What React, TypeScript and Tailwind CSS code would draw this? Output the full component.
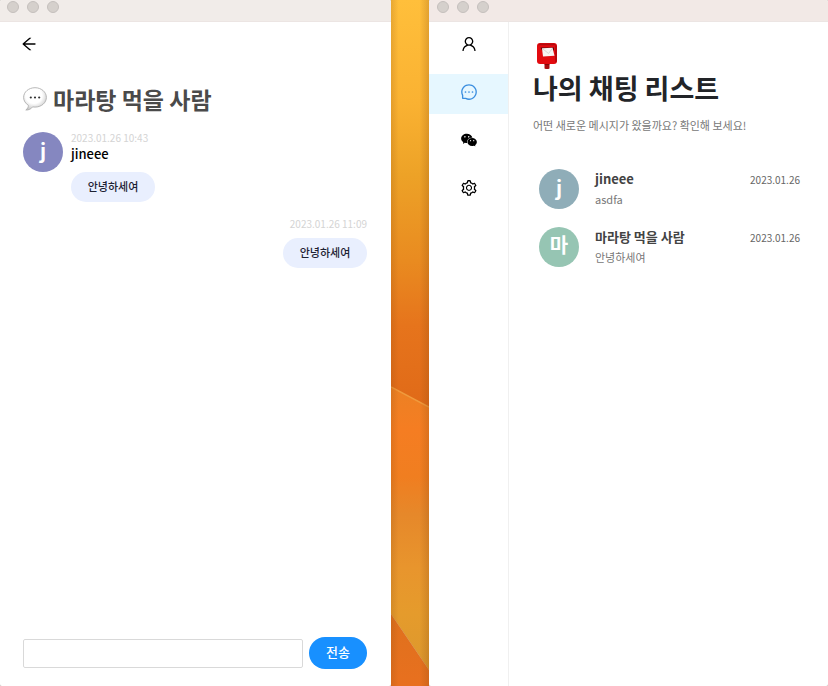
import { useState, type ReactNode } from "react";
import {
  AiOutlineArrowLeft,
  AiOutlineUser,
  AiOutlineMessage,
  AiOutlineWechat,
  AiOutlineSetting,
} from "react-icons/ai";

function TitleBar({ className }: { className: string }) {
  return (
    <div className={`flex h-[22px] shrink-0 gap-2 border-b border-[#ece5e3] ${className}`}>
      {[0, 1, 2].map((i) => (
        <span key={i} className="mt-px size-3 rounded-full border border-[#c4bfbc] bg-[#d5d0cc]" />
      ))}
    </div>
  );
}

function Avatar({ letter, color }: { letter: string; color: string }) {
  return (
    <span
      className={`flex size-10 shrink-0 items-center justify-center rounded-full pb-1 text-xl leading-none font-bold text-white ${color}`}
    >
      {letter}
    </span>
  );
}

function Bubble({ children }: { children: ReactNode }) {
  return (
    <p className="flex h-[30px] w-[84px] items-center justify-center rounded-full bg-[#e9effe] pb-0.5 text-[11px] font-medium text-[#1d2233]">
      {children}
    </p>
  );
}

function SpeechBalloon() {
  return (
    <svg viewBox="0 0 24 24" className="size-6 shrink-0" aria-hidden="true">
      <defs>
        <radialGradient id="balloon" cx="45%" cy="35%" r="65%">
          <stop offset="0.55" stopColor="#ffffff" />
          <stop offset="1" stopColor="#c8c8c8" />
        </radialGradient>
      </defs>
      <path
        d="M12 .7C5.700.7.6 5 .6 10.400c0 3.300 1.900 6.100 4.800 7.900.1 2-1 3.600-2.600 4.700 2.900.2 5.200-1 6.800-3.100.8.1 1.600.2 2.400.2 6.300 0 11.400-4.300 11.400-9.700S18.300.7 12 .7z"
        fill="url(#balloon)"
        stroke="#b0b0b0"
        strokeWidth="0.9"
      />
      <circle cx="7.800" cy="10.500" r="1.100" fill="#333" />
      <circle cx="12" cy="10.500" r="1.100" fill="#333" />
      <circle cx="16.200" cy="10.500" r="1.100" fill="#333" />
    </svg>
  );
}

function Postbox() {
  return (
    <svg viewBox="0 0 22 28" className="h-7 w-[22px]" aria-hidden="true">
      <path d="M8.500 20h5v6.500q-2.500 1-5 0z" fill="#a80d10" />
      <path d="M8.500 20h5v2.500h-5z" fill="#5e0507" />
      <rect x="1" y="1" width="20" height="21" rx="3" fill="#e30b10" />
      <path d="M2 3.200Q2.500 1.400 4.500 1.400h13q2 0 2.500 1.800z" fill="#b30a0e" />
      <path d="M19 3v17.500q2-.3 2-2V4z" fill="#b9090d" />
      <path d="M4.500 5.500h13.500v3H6z" fill="#5b090b" />
      <path d="M6 6.300l10.500-.5 2 8-11.500.8z" fill="#f7f4f2" />
      <path d="M7 7l5.500 4.500L16.300 6.500" fill="none" stroke="#d3cdca" strokeWidth=".8" />
    </svg>
  );
}

function Wallpaper() {
  return (
    <svg viewBox="0 0 38 686" preserveAspectRatio="none" className="size-full" aria-hidden="true">
      <defs>
        <linearGradient id="sky" x1="0" y1="0" x2="0" y2="1">
          <stop offset="0" stopColor="#ffbf3b" />
          <stop offset="0.250" stopColor="#fab232" />
          <stop offset="0.430" stopColor="#eda227" />
          <stop offset="0.640" stopColor="#e98b20" />
          <stop offset="0.800" stopColor="#e6741c" />
          <stop offset="1" stopColor="#e06a18" />
        </linearGradient>
        <linearGradient id="dune" x1="0" y1="0" x2="0" y2="1">
          <stop offset="0" stopColor="#ec8124" />
          <stop offset="0.150" stopColor="#f57d22" />
          <stop offset="0.320" stopColor="#f07e20" />
          <stop offset="0.450" stopColor="#e6882a" />
          <stop offset="0.640" stopColor="#e8952d" />
          <stop offset="0.800" stopColor="#e59b2c" />
          <stop offset="1" stopColor="#dc982d" />
        </linearGradient>
        <linearGradient id="shore" x1="0" y1="0" x2="0" y2="1">
          <stop offset="0" stopColor="#df711d" />
          <stop offset="1" stopColor="#e8701f" />
        </linearGradient>
        <linearGradient id="edges" x1="0" y1="0" x2="1" y2="0">
          <stop offset="0" stopColor="#8a4a10" stopOpacity="0.200" />
          <stop offset="0.200" stopColor="#8a4a10" stopOpacity="0" />
          <stop offset="0.750" stopColor="#8a4a10" stopOpacity="0" />
          <stop offset="1" stopColor="#8a4a10" stopOpacity="0.250" />
        </linearGradient>
      </defs>
      <path d="M0 0H38V407L0 387z" fill="url(#sky)" />
      <path d="M0 387L38 407V670L0 614z" fill="url(#dune)" />
      <path d="M0 387L38 407" stroke="#f09a3c" strokeWidth="1.500" />
      <path d="M0 614L38 670V686H0z" fill="url(#shore)" />
      <path d="M0 0H38V686H0z" fill="url(#edges)" />
    </svg>
  );
}

const menu = [
  { label: "친구", Icon: AiOutlineUser },
  { label: "채팅", Icon: AiOutlineMessage },
  { label: "오픈채팅", Icon: AiOutlineWechat },
  { label: "설정", Icon: AiOutlineSetting },
];

const chats = [
  { name: "jineee", letter: "j", message: "asdfa", date: "2023.01.26", color: "bg-[#8fadb8]" },
  { name: "마라탕 먹을 사람", letter: "마", message: "안녕하세여", date: "2023.01.26", color: "bg-[#96c5b3]" },
];

function ChatRoom() {
  const [draft, setDraft] = useState("");
  return (
    <section className="flex min-w-0 flex-col overflow-hidden rounded-xs bg-white">
      <TitleBar className="bg-[#f1ece9] pl-[7px]" />
      <div className="flex flex-1 flex-col pt-[13px] pr-6 pb-[17px] pl-[23px]">
        <button type="button" aria-label="뒤로" className="-ml-[3px] self-start text-black">
          <AiOutlineArrowLeft className="size-[18px]" />
        </button>
        <h1 className="mt-[30px] flex h-8 items-center gap-1.5 text-[23px] leading-8 font-bold text-[#4a4a4a]">
          <SpeechBalloon />
          마라탕 먹을 사람
        </h1>
        <div className="mt-[17px] flex gap-2">
          <Avatar letter="j" color="bg-[#8587c0]" />
          <div>
            <time className="block text-[10px] leading-3 text-[#d4d4d4]">2023.01.26 10:43</time>
            <p className="mt-0.5 mb-2.5 text-[13px] leading-4 font-medium text-black">jineee</p>
            <Bubble>안녕하세여</Bubble>
          </div>
        </div>
        <div className="mt-4 flex flex-col items-end gap-2">
          <time className="text-[10px] leading-3 text-[#d4d4d4]">2023.01.26 11:09</time>
          <Bubble>안녕하세여</Bubble>
        </div>
        <form className="mt-auto flex items-center gap-1.5" onSubmit={(e) => e.preventDefault()}>
          <input
            aria-label="메시지"
            value={draft}
            onChange={(e) => setDraft(e.target.value)}
            className="h-[29px] min-w-0 flex-1 rounded-xs border border-[#d9d9d9] bg-white px-2 text-xs outline-none"
          />
          <button
            type="submit"
            className="h-8 w-[58px] rounded-full bg-[#1890ff] pb-0.5 text-[13px] font-medium text-white"
          >
            전송
          </button>
        </form>
      </div>
    </section>
  );
}

function ChatList() {
  return (
    <section className="flex min-w-0 flex-col overflow-hidden rounded-xs bg-white">
      <TitleBar className="bg-[#f2e9e6] pl-2" />
      <div className="flex flex-1">
        <nav className="flex w-20 shrink-0 flex-col gap-2 border-r border-[#f0f0f0] pt-1">
          {menu.map(({ label, Icon }) => (
            <button
              key={label}
              type="button"
              aria-label={label}
              className={`flex h-10 items-center justify-center pb-1 ${
                label === "채팅" ? "bg-[#e6f7ff] text-[#3c8fe0]" : "text-black"
              }`}
            >
              <Icon className="size-[18px]" />
            </button>
          ))}
        </nav>
        <main className="min-w-0 flex-1 pt-5 pr-7 pl-6">
          <div className="pl-[3px]">
            <Postbox />
          </div>
          <h2 className="text-[27px] leading-9 font-bold text-[#222428]">나의 채팅 리스트</h2>
          <p className="mt-[11px] text-[11px] leading-4 text-[#777]">어떤 새로운 메시지가 왔을까요? 확인해 보세요!</p>
          <ul className="mt-8 flex flex-col gap-3 pl-1.5">
            {chats.map((chat) => (
              <li key={chat.name} className="flex h-[46px] gap-4">
                <div className="pt-1">
                  <Avatar letter={chat.letter} color={chat.color} />
                </div>
                <div className="min-w-0 flex-1 pt-1">
                  <p className="text-[13px] leading-5 font-bold text-[#434343]">{chat.name}</p>
                  <p className="text-[11px] leading-5 text-[#777]">{chat.message}</p>
                </div>
                <time className="pt-[7px] text-[10px] leading-4 text-[#666]">{chat.date}</time>
              </li>
            ))}
          </ul>
        </main>
      </div>
    </section>
  );
}

export default function App() {
  return (
    <div className="grid h-screen grid-cols-[391fr_38fr_399fr] bg-[#c9c3bf] font-['Noto_Sans_CJK_KR',sans-serif]">
      <ChatRoom />
      <Wallpaper />
      <ChatList />
    </div>
  );
}
